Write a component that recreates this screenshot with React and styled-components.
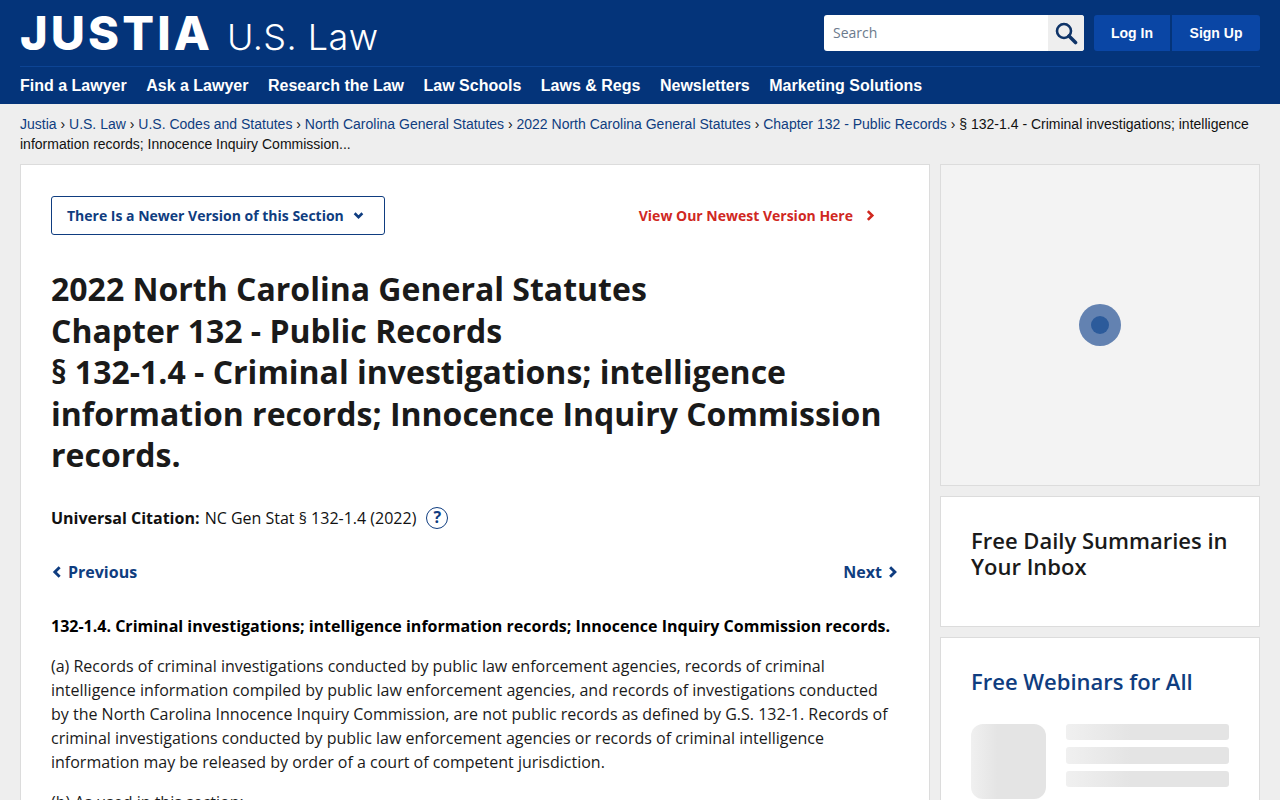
import React from 'react';
import styled, { createGlobalStyle } from 'styled-components';

const GlobalStyle = createGlobalStyle`
    html, body {
        margin: 0;
        padding: 0;
        height: 800px;
        overflow: hidden;
        background-color: #eeeeee;
        font-family: "Open Sans", "Liberation Sans", Arial, sans-serif;
        color: #111;
    }
    * {
        box-sizing: border-box;
    }
`

const Header = styled.header`
    background-color: #04347a;
    height: 104px;
    padding: 0 20px;
`

const HeaderTop = styled.div`
    display: flex;
    justify-content: space-between;
    height: 67px;
    border-bottom: 1px solid #0d4494;
    padding-top: 15px;
`

const Logo = styled.a`
    display: flex;
    align-items: baseline;
    color: #fff;
    height: 36px;
    white-space: nowrap;
`

const LogoMark = styled.span`
    font-family: "Inter", sans-serif;
    font-weight: 800;
    font-size: 47px;
    line-height: 36px;
    letter-spacing: 3.1px;
`

const LogoSub = styled.span`
    font-family: "Inter", sans-serif;
    font-weight: 300;
    font-size: 36px;
    line-height: 36px;
    margin-left: 14px;
    letter-spacing: 0.45px;
`

const HeaderActions = styled.div`
    display: flex;
    height: 36px;
`

const SearchBox = styled.div`
    display: flex;
    width: 260px;
    height: 36px;
    background-color: #fff;
    border-radius: 3px;
    overflow: hidden;
    margin-right: 10px;
`

const SearchInput = styled.div`
    flex: 1;
    padding-left: 9px;
    font-size: 14px;
    line-height: 36px;
    color: #6c7a8c;
`

const SearchButton = styled.div`
    width: 36px;
    display: flex;
    align-items: center;
    justify-content: center;
    background-color: #eeeeee;
`

const AuthButton = styled.a`
    display: block;
    width: ${p => p.$width}px;
    margin-left: ${p => p.$gap || 0}px;
    height: 36px;
    background-color: #0a46a5;
    border-radius: ${p => p.$radius};
    color: #fff;
    font-family: "Liberation Sans", Arial, sans-serif;
    font-weight: 700;
    font-size: 14px;
    line-height: 36px;
    text-align: center;
`

const Nav = styled.nav`
    display: flex;
    gap: 19.5px;
    height: 37px;
    align-items: center;
`

const NavLink = styled.a`
    color: #fff;
    font-family: "Liberation Sans", Arial, sans-serif;
    font-weight: 700;
    font-size: 16px;
    line-height: 37px;
    white-space: nowrap;
`

const Breadcrumbs = styled.div`
    padding: 10px 20px 0;
    height: 60px;
    font-family: "Liberation Sans", Arial, sans-serif;
    font-size: 14px;
    line-height: 20px;
    color: #111;
`

const Crumb = styled.a`
    color: #0f3d80;
`

const Columns = styled.div`
    display: flex;
    gap: 10px;
    padding: 0 20px;
    align-items: flex-start;
`

const MainCard = styled.main`
    width: 910px;
    flex: none;
    background-color: #fff;
    border: 1px solid #dcdcdc;
    padding: 31px 30px 40px;
`

const Sidebar = styled.aside`
    width: 320px;
    flex: none;
    display: flex;
    flex-direction: column;
    gap: 10px;
`

const VersionRow = styled.div`
    display: flex;
    justify-content: space-between;
    align-items: center;
    height: 39px;
    padding-right: 23px;
`

const VersionButton = styled.button`
    display: flex;
    align-items: center;
    width: 334px;
    height: 39px;
    padding: 0 15px;
    background-color: #fff;
    border: 1px solid #0f3d80;
    border-radius: 3px;
    color: #0f3d80;
    font-family: inherit;
    font-weight: 700;
    font-size: 14px;
`

const DownMark = styled.span`
    display: flex;
    margin-left: 9px;
`

const NewestLink = styled.a`
    display: flex;
    align-items: center;
    gap: 12px;
    color: #d0281f;
    font-weight: 700;
    font-size: 14px;
`

const Title = styled.h1`
    margin: 33px 0 0;
    font-size: 32px;
    line-height: 41.6px;
    font-weight: 700;
    color: #1a1a1a;
`

const Citation = styled.div`
    display: flex;
    align-items: center;
    margin-top: 30px;
    height: 24px;
    font-size: 16px;
    line-height: 24px;
    white-space: pre;

    strong {
        font-weight: 700;
        margin-right: 1px;
    }
`

const HelpIcon = styled.span`
    width: 22px;
    height: 22px;
    margin-left: 10px;
    border: 1.5px solid #0f3d80;
    border-radius: 50%;
    color: #0f3d80;
    font-weight: 700;
    font-size: 16px;
    line-height: 19px;
    text-align: center;
`

const Pager = styled.div`
    display: flex;
    justify-content: space-between;
    margin-top: 30px;
    height: 24px;
`

const PagerLink = styled.a`
    display: flex;
    align-items: center;
    gap: 5px;
    color: #0f3d80;
    font-weight: 700;
    font-size: 16px;
    line-height: 24px;
`

const SectionHead = styled.p`
    margin: 30px 0 0;
    font-size: 16px;
    line-height: 24px;
    font-weight: 700;
    color: #000;
    white-space: nowrap;
`

const Paragraph = styled.p`
    margin: 16px 0 0;
    font-size: 16px;
    line-height: 24px;
    color: #1a1a1a;
`

const AdBox = styled.div`
    height: 322px;
    background-color: #f3f3f3;
    border: 1px solid #dcdcdc;
    display: flex;
    align-items: center;
    justify-content: center;
`

const LoaderRing = styled.div`
    width: 42px;
    height: 42px;
    border-radius: 50%;
    background-color: #6382b1;
    display: flex;
    align-items: center;
    justify-content: center;
`

const LoaderDot = styled.div`
    width: 18px;
    height: 18px;
    border-radius: 50%;
    background-color: #2c5b9b;
`

const SideCard = styled.section`
    background-color: #fff;
    border: 1px solid #dcdcdc;
    padding: ${p => p.$pad};
    height: ${p => p.$height};
`

const SideTitle = styled.h2`
    margin: 0;
    font-size: 22px;
    line-height: 26px;
    font-weight: 600;
    color: ${p => p.$color || '#1a1a1a'};
`

const SkeletonRow = styled.div`
    display: flex;
    gap: 20px;
    margin-top: 30px;
`

const SkeletonThumb = styled.div`
    width: 75px;
    height: 75px;
    border-radius: 12px;
    background: linear-gradient(90deg, #f0f0f0 0%, #e4e4e4 35%, #e4e4e4 100%);
`

const SkeletonLines = styled.div`
    flex: 1;
    display: flex;
    flex-direction: column;
    gap: 7px;
`

const SkeletonLine = styled.div`
    height: 16.4px;
    border-radius: 3px;
    background: linear-gradient(90deg, #f0f0f0 0%, #e4e4e4 40%, #e4e4e4 100%);
`

const navItems = ['Find a Lawyer', 'Ask a Lawyer', 'Research the Law', 'Law Schools', 'Laws & Regs', 'Newsletters', 'Marketing Solutions']

const crumbs = ['Justia', 'U.S. Law', 'U.S. Codes and Statutes', 'North Carolina General Statutes', '2022 North Carolina General Statutes', 'Chapter 132 - Public Records']

const Chevron = ({ dir, color, size = 10 }) => {
    const paths = {
        down: 'M1.5 3 L5 6.5 L8.5 3',
        right: 'M2.6 1 L6.6 5 L2.6 9',
        left: 'M7.2 1 L3.2 5 L7.2 9',
    }
    return (
        <svg width={size} height={size} viewBox="0 0 10 10" fill="none" stroke={color} strokeWidth="2.4">
            <path d={paths[dir]} />
        </svg>
    )
}

const SearchIcon = () => (
    <svg width="24" height="24" viewBox="0 0 24 24" fill="none" stroke="#0f3468">
        <circle cx="10" cy="10" r="7" strokeWidth="2.6" />
        <path d="M15 15 L21.5 21.5" strokeWidth="3.6" strokeLinecap="round" />
    </svg>
)

export default function App() {
    return (
        <React.Fragment>
            <GlobalStyle />
            <Header>
                <HeaderTop>
                    <Logo>
                        <LogoMark>JUSTIA</LogoMark>
                        <LogoSub>U.S. Law</LogoSub>
                    </Logo>
                    <HeaderActions>
                        <SearchBox>
                            <SearchInput>Search</SearchInput>
                            <SearchButton><SearchIcon /></SearchButton>
                        </SearchBox>
                        <AuthButton $width={76} $radius="3px 0 0 3px">Log In</AuthButton>
                        <AuthButton $width={88} $gap={2} $radius="0 3px 3px 0">Sign Up</AuthButton>
                    </HeaderActions>
                </HeaderTop>
                <Nav>
                    {navItems.map(item => <NavLink key={item}>{item}</NavLink>)}
                </Nav>
            </Header>
            <Breadcrumbs>
                {crumbs.map(c => (
                    <React.Fragment key={c}>
                        <Crumb>{c}</Crumb> ›{' '}
                    </React.Fragment>
                ))}
                § 132-1.4 - Criminal investigations; intelligence information records; Innocence Inquiry Commission...
            </Breadcrumbs>
            <Columns>
                <MainCard>
                    <VersionRow>
                        <VersionButton>
                            There Is a Newer Version of this Section
                            <DownMark><Chevron dir="down" color="#0f3d80" size={11} /></DownMark>
                        </VersionButton>
                        <NewestLink>
                            View Our Newest Version Here
                            <Chevron dir="right" color="#d0281f" size={11} />
                        </NewestLink>
                    </VersionRow>
                    <Title>
                        2022 North Carolina General Statutes<br />
                        Chapter 132 - Public Records<br />
                        § 132-1.4 - Criminal investigations; intelligence information records; Innocence Inquiry Commission records.
                    </Title>
                    <Citation>
                        <strong>Universal Citation: </strong>NC Gen Stat § 132-1.4 (2022)
                        <HelpIcon>?</HelpIcon>
                    </Citation>
                    <Pager>
                        <PagerLink><Chevron dir="left" color="#0f3d80" size={12} />Previous</PagerLink>
                        <PagerLink>Next<Chevron dir="right" color="#0f3d80" size={12} /></PagerLink>
                    </Pager>
                    <SectionHead>132-1.4. Criminal investigations; intelligence information records; Innocence Inquiry Commission records.</SectionHead>
                    <Paragraph>
                        (a) Records of criminal investigations conducted by public law enforcement agencies, records of criminal intelligence information compiled by public law enforcement agencies, and records of investigations conducted by the North Carolina Innocence Inquiry Commission, are not public records as defined by G.S. 132-1. Records of criminal investigations conducted by public law enforcement agencies or records of criminal intelligence information may be released by order of a court of competent jurisdiction.
                    </Paragraph>
                    <Paragraph>(b) As used in this section:</Paragraph>
                </MainCard>
                <Sidebar>
                    <AdBox>
                        <LoaderRing><LoaderDot /></LoaderRing>
                    </AdBox>
                    <SideCard $pad="30px 30px 0" $height="131px">
                        <SideTitle>Free Daily Summaries in Your Inbox</SideTitle>
                    </SideCard>
                    <SideCard $pad="30px 30px 0" $height="220px">
                        <SideTitle $color="#0f3d80">Free Webinars for All</SideTitle>
                        <SkeletonRow>
                            <SkeletonThumb />
                            <SkeletonLines>
                                <SkeletonLine />
                                <SkeletonLine />
                                <SkeletonLine />
                            </SkeletonLines>
                        </SkeletonRow>
                    </SideCard>
                </Sidebar>
            </Columns>
        </React.Fragment>
    )
}
